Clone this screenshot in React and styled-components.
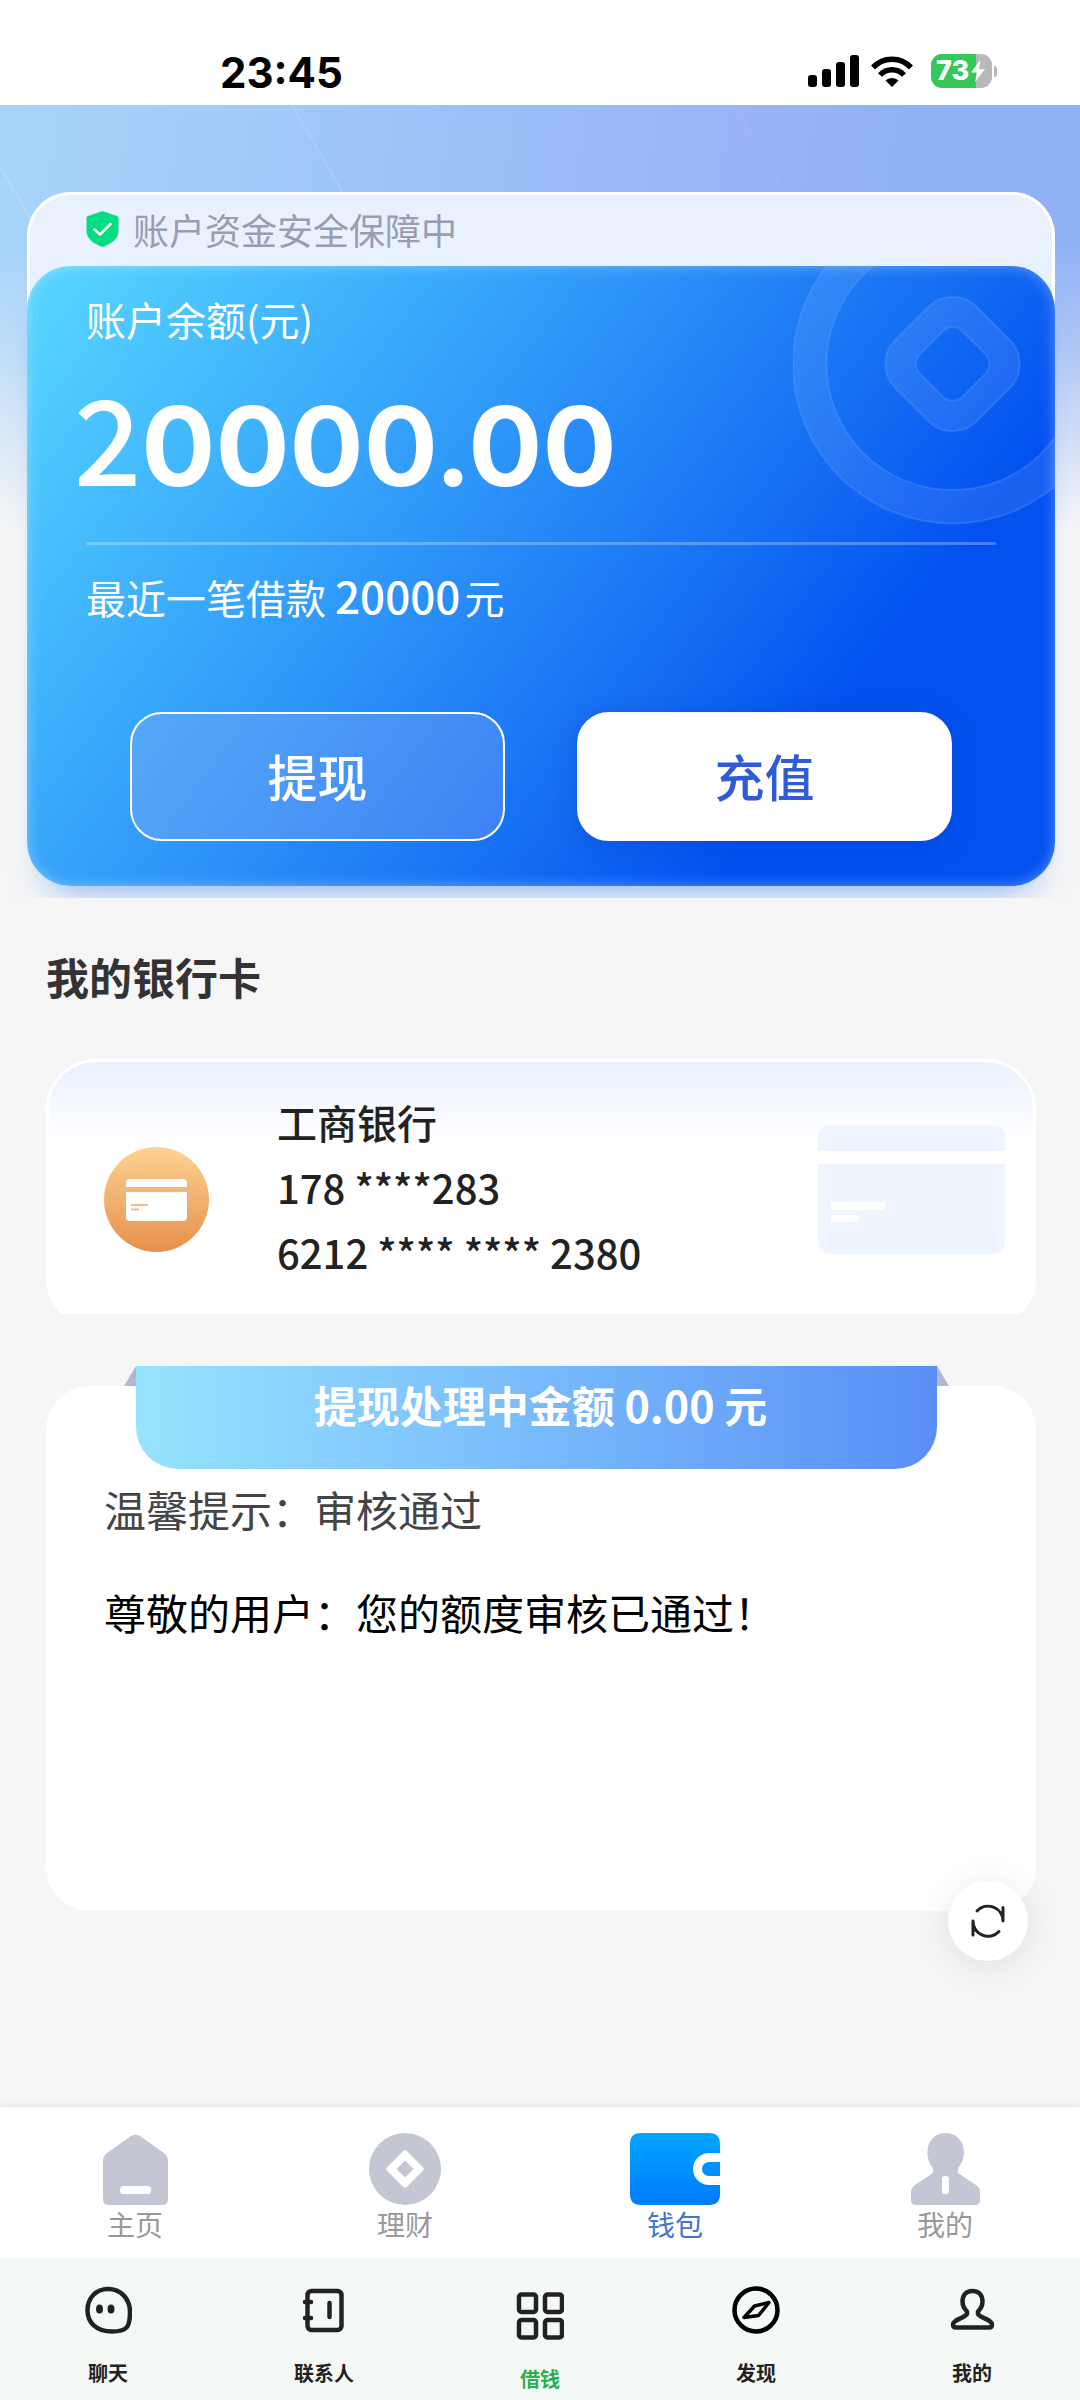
import styled, { createGlobalStyle, css } from "styled-components";

const GlobalStyle = createGlobalStyle`
  * {
    box-sizing: border-box;
  }

  body {
    margin: 0;
    background: #f6f6f6;
    color: #222;
    font-family: "Noto Sans CJK SC", sans-serif;
  }
`;

const Page = styled.div`
  display: flex;
  flex-direction: column;
  min-height: 100vh;
`;

/* ---------- status bar ---------- */

const StatusBar = styled.header`
  display: flex;
  align-items: flex-end;
  justify-content: space-between;
  height: 105px;
  padding: 0 83px 8px 220px;
  background: #fff;
`;

const Clock = styled.time`
  font-size: 42px;
  line-height: 48px;
  font-weight: 700;
  font-family: "Inter", sans-serif;
  color: #000;
`;

const StatusIcons = styled.div`
  display: flex;
  align-items: center;
  gap: 12px;
  padding-bottom: 9px;
`;

const Battery = styled.span`
  position: relative;
  display: flex;
  align-items: center;
  gap: 2px;
  width: 61px;
  height: 34px;
  margin: 0 5px 0 6px;
  padding-left: 5px;
  border-radius: 11px;
  background: linear-gradient(90deg, #34c759 74%, #b9b9b9 74%);
  color: #fff;
  font-family: "Inter", sans-serif;
  font-size: 27px;
  line-height: 34px;
  font-weight: 800;

  &::after {
    content: "";
    position: absolute;
    right: -5px;
    width: 3px;
    height: 11px;
    border-radius: 0 3px 3px 0;
    background: #b9b9b9;
  }
`;

/* ---------- hero with the balance card ---------- */

const Hero = styled.section`
  position: relative;
  overflow: hidden;
  padding: 87px 25px 12px 27px;
  background:
    linear-gradient(180deg, rgba(246, 246, 246, 0) 140px, rgba(246, 246, 246, 0.3) 240px, #f6f6f6 425px),
    linear-gradient(100deg, #a6d5fa 0%, #9fc5f8 30%, #98b4f6 62%, #90b2f4 75%);
`;

const HeroLines = styled.svg`
  position: absolute;
  top: 0;
  left: 0;
`;

const Account = styled.div`
  position: relative;
  border-radius: 44px;
  background: #eaf1fe;
  box-shadow: inset 0 0 0 3px #fff;
`;

const SafeNote = styled.p`
  display: flex;
  align-items: center;
  gap: 14px;
  height: 74px;
  margin: 0;
  padding-left: 59px;
  font-size: 36px;
  line-height: 52px;
  color: #989db3;
`;

const BalanceCard = styled.div`
  position: relative;
  padding: 25px 59px 45px;
  border-radius: 44px;
  background: linear-gradient(127deg, #54d3ff 3%, #2e96f9 40%, #1872f4 60%, #0352f0 77%);
  box-shadow:
    inset 0 0 14px rgba(255, 255, 255, 0.35),
    0 24px 36px -22px rgba(40, 120, 245, 0.6);
  color: #fff;
`;

const CoinMark = styled.svg`
  position: absolute;
  top: 0;
  right: 0;
  border-radius: 0 44px 0 0;
`;

const BalanceLabel = styled.div`
  font-size: 40px;
  line-height: 56px;
`;

const Balance = styled.div`
  display: flex;
  align-items: baseline;
  height: 134px;
  margin: 32px 0 29px -12px;
  font-family: "Inter", sans-serif;
  font-size: 110px;
  font-weight: 700;
  line-height: 134px;

  span {
    font-family: "Noto Sans CJK SC", sans-serif;
    font-size: 118px;
    font-weight: 500;
    line-height: 110px;
  }
`;

const Divider = styled.hr`
  height: 3px;
  margin: 0;
  border: 0;
  border-radius: 2px;
  background: rgba(255, 255, 255, 0.27);
`;

const LastLoan = styled.div`
  margin-top: 22px;
  font-size: 40px;
  line-height: 60px;

  span {
    margin-right: 4px;
    font-size: 44px;
    font-weight: 500;
    line-height: 44px;
  }
`;

const Actions = styled.div`
  display: flex;
  gap: 72px;
  padding: 0 44px;
  margin-top: 85px;
`;

const ActionButton = styled.button`
  flex: 1;
  height: 129px;
  padding: 0 0 4px;
  border: 2px solid #fff;
  border-radius: 32px;
  background: rgba(160, 175, 245, 0.28);
  color: #fff;
  font-family: inherit;
  font-size: 50px;
  font-weight: 500;
  cursor: pointer;

  ${({ $solid }) =>
    $solid &&
    css`
      background: #fff;
      color: #2f5bd8;
      box-shadow: 0 4px 24px rgba(0, 40, 150, 0.24);
    `}
`;

/* ---------- bank card ---------- */

const Content = styled.main`
  flex: 1;
  padding: 0 44px 0 46px;
`;

const SectionTitle = styled.h2`
  margin: 0;
  padding: 46px 0 51px;
  font-size: 43px;
  line-height: 64px;
  font-weight: 700;
  color: #333;
`;

// The bottom edge of the card is cut a little above its rounded end
const BankCardClip = styled.div`
  overflow: hidden;
`;

const BankCard = styled.article`
  display: grid;
  grid-template-columns: 105px 1fr 187px;
  align-items: center;
  column-gap: 68px;
  margin-bottom: -14px;
  padding: 28px 28px 40px 55px;
  border: 3px solid #fff;
  border-radius: 50px;
  background: linear-gradient(180deg, #e9f1ff 0, #f2f6ff 30px, #fff 78px);
`;

const BankIcon = styled.svg`
  margin-top: 24px;
`;

const CardGhost = styled.svg`
  margin-top: 4px;
`;

const BankLines = styled.div`
  font-size: 40px;
  line-height: 65px;
  font-weight: 500;
`;

/* ---------- notice panel ---------- */

const Notice = styled.section`
  position: relative;
  display: flex;
  flex-direction: column;
  min-height: 525px;
  margin-top: 72px;
  border-radius: 44px;
  background: #fff;
`;

const Ribbon = styled.h3`
  position: relative;
  height: 103px;
  margin: -20px 99px 8px 90px;
  border-radius: 0 0 42px 42px;
  background: linear-gradient(90deg, #97e3ff 0%, #78bbfc 50%, #5a8ef6 100%);
  color: #fff;
  font-size: 43px;
  line-height: 76px;
  font-weight: 700;
  text-align: center;
  padding-left: 8px;

  &::before,
  &::after {
    content: "";
    position: absolute;
    top: 0;
    width: 12px;
    height: 20px;
    background: #b1b7d3;
  }

  &::before {
    right: 100%;
    clip-path: polygon(100% 0, 100% 100%, 0 100%);
  }

  &::after {
    left: 100%;
    clip-path: polygon(0 0, 100% 100%, 0 100%);
  }
`;

const NoticeText = styled.p`
  margin: 0;
  padding: 0 58px;
  font-size: 42px;
  line-height: 64px;
  color: ${({ $muted }) => ($muted ? "#444" : "#000")};

  & + & {
    margin-top: 39px;
  }
`;

const RefreshButton = styled.button`
  position: absolute;
  right: 8px;
  bottom: -50px;
  display: grid;
  place-items: center;
  width: 80px;
  height: 80px;
  padding: 0;
  border: 0;
  border-radius: 50%;
  background: #fff;
  box-shadow: 0 4px 36px rgba(0, 0, 0, 0.1);
  cursor: pointer;
`;

/* ---------- bottom navigation ---------- */

const WalletNav = styled.nav`
  display: grid;
  grid-template-columns: repeat(4, 1fr);
  padding: 26px 0 14px;
  background: #fff;
  box-shadow: 0 -2px 6px rgba(0, 0, 0, 0.07);
`;

const WalletTab = styled.a`
  display: flex;
  flex-direction: column;
  align-items: center;
  color: ${({ $active }) => ($active ? "#4474cc" : "#999")};
  font-size: 28px;
  line-height: 39px;
  text-decoration: none;
`;

const AppNav = styled.nav`
  display: grid;
  grid-template-columns: repeat(5, 1fr);
  height: 142px;
  background: #f5f9f6;
`;

const AppTab = styled.a`
  display: flex;
  flex-direction: column;
  align-items: center;
  gap: 25px;
  padding-top: ${({ $active }) => ($active ? "34px" : "28px")};
  color: ${({ $active }) => ($active ? "#2bb04f" : "#222")};
  font-size: 20px;
  line-height: 28px;
  font-weight: 700;
  text-decoration: none;
`;

function LineIcon({ children }) {
  return (
    <svg
      width="48"
      height="48"
      viewBox="0 0 48 48"
      fill="none"
      stroke="#222"
      strokeWidth="4.5"
      strokeLinecap="round"
      strokeLinejoin="round"
    >
      {children}
    </svg>
  );
}

const walletTabs = [
  {
    label: "主页",
    icon: (
      <svg width="65" height="72" viewBox="0 0 65 72">
        <path
          fill="#c4c6d3"
          d="M28 3Q32.500 .5 37 3L61 20Q65 23 65 28V66Q65 72 59 72H6Q0 72 0 66V28Q0 23 4 20Z"
        />
        <rect x="17" y="53" width="31" height="8" rx="3.500" fill="#fff" />
      </svg>
    ),
  },
  {
    label: "理财",
    icon: (
      <svg width="72" height="72" viewBox="0 0 72 72">
        <circle cx="36" cy="36" r="36" fill="#c4c6d3" />
        <g transform="rotate(45 36 36)">
          <rect x="22" y="22" width="28" height="28" rx="3" fill="#fff" />
          <rect x="30" y="30" width="12" height="12" fill="#c4c6d3" />
        </g>
      </svg>
    ),
  },
  {
    label: "钱包",
    active: true,
    icon: (
      <svg width="90" height="72" viewBox="0 0 90 72">
        <defs>
          <linearGradient id="wallet" x1="0" y1="0" x2="0" y2="1">
            <stop offset="0" stopColor="#00a5ff" />
            <stop offset="1" stopColor="#007bff" />
          </linearGradient>
        </defs>
        <path
          fill="url(#wallet)"
          d="M11 0H79Q90 0 90 11V20H79A16 16 0 0 0 79 52H90V61Q90 72 79 72H11Q0 72 0 61V11Q0 0 11 0ZM90 29V43H79A7 7 0 0 1 79 29Z"
        />
      </svg>
    ),
  },
  {
    label: "我的",
    icon: (
      <svg width="69" height="72" viewBox="0 0 69 72">
        <path
          fill="#c4c6d3"
          d="M34.500 0C45 0 53 8 53 19C53 26 50.500 31 47 35V40L65 52Q69 55 69 59V67Q69 72 64 72H5Q0 72 0 67V59Q0 55 4 52L22 40V35C18.500 31 16.500 26 16.500 19C16.500 8 24 0 34.500 0Z"
        />
        <rect x="31" y="43" width="7" height="18" rx="3" fill="#fff" />
      </svg>
    ),
  },
];

const appTabs = [
  {
    label: "聊天",
    icon: (
      <LineIcon>
        <path d="M24 3C37 3 46 13 46 26C46 41 43 45.500 28 45.500C12 45.500 3.500 36 3.500 24.500C3.500 12 12 3 24 3Z" />
        <ellipse cx="15.500" cy="23" rx="3.500" ry="4.500" fill="#222" stroke="none" />
        <ellipse cx="27" cy="23" rx="3.500" ry="4.500" fill="#222" stroke="none" />
      </LineIcon>
    ),
  },
  {
    label: "联系人",
    icon: (
      <LineIcon>
        <rect x="7.500" y="5" width="34" height="39" rx="4" />
        <path d="M5 16H11M5 32H11M29.500 17V31" />
      </LineIcon>
    ),
  },
  {
    label: "借钱",
    active: true,
    icon: (
      <LineIcon>
        <rect x="3" y="2.500" width="17" height="17.500" rx="2.500" />
        <rect x="29" y="2.500" width="17" height="17.500" rx="2.500" />
        <rect x="3" y="28" width="17" height="17.500" rx="2.500" />
        <rect x="29" y="28" width="17" height="17.500" rx="2.500" />
      </LineIcon>
    ),
  },
  {
    label: "发现",
    icon: (
      <LineIcon>
        <circle cx="24" cy="24" r="21.500" stroke="#000" />
        <path d="M37 16.500L22.500 20L12 31.500L26.500 29.500Z" stroke="#000" strokeWidth="3.500" />
      </LineIcon>
    ),
  },
  {
    label: "我的",
    icon: (
      <LineIcon>
        <path d="M24.500 5C31 5 34.500 9.500 34.500 15.500C34.500 20 32.500 23 30 25.500V28C32 32 44 33.500 44 38.500Q44 41.500 41 41.500H8Q5 41.500 5 38.500C5 33.500 17 32 19 28V25.500C16.500 23 14.500 20 14.500 15.500C14.500 9.500 18 5 24.500 5Z" />
      </LineIcon>
    ),
  },
];

export default function App() {
  return (
    <Page>
      <GlobalStyle />

      <StatusBar>
        <Clock>23:45</Clock>
        <StatusIcons>
          <svg width="51" height="32" viewBox="0 0 51 32">
            <rect x="0" y="20" width="9" height="12" rx="3" />
            <rect x="14" y="14" width="9" height="18" rx="3" />
            <rect x="28" y="7" width="9" height="25" rx="3" />
            <rect x="42" y="0" width="9" height="32" rx="3" />
          </svg>
          <svg width="42" height="31" viewBox="0 0 42 31">
            <path
              fill="none"
              stroke="#000"
              strokeWidth="5.500"
              d="M2 11.500C12.500 .5 29.500 .5 40 11.500M9 19C15.500 12 26.500 12 33 19"
            />
            <path d="M14.500 24.500C18 21 24 21 27.500 24.500L21 31Z" />
          </svg>
          <Battery>
            73
            <svg width="14" height="22" viewBox="0 0 14 22" fill="#fff">
              <path d="M9.500 0L0 12.500H6L4 22L14 9H8Z" />
            </svg>
          </Battery>
        </StatusIcons>
      </StatusBar>

      <Hero>
        <HeroLines width="1080" height="200" viewBox="0 0 1080 200" stroke="#fff" strokeWidth="2">
          <path d="M292 0L345 92" opacity=".12" />
          <path d="M-10 44L40 130" opacity=".14" />
          <path d="M734 0L787 92" opacity=".05" />
        </HeroLines>
        <Account>
          <SafeNote>
            <svg width="33" height="36" viewBox="0 0 33 36">
              <path
                fill="#06dc83"
                d="M14.500 .8Q16.500 -.2 18.500 .8L31 5Q32.500 5.500 32.500 7V20C32.500 28 25 33 16.500 36C8 33 .5 28 .5 20V7Q.5 5.500 2 5Z"
              />
              <path
                d="M8.500 18.500L14 23.500L24.500 13"
                fill="none"
                stroke="#fff"
                strokeWidth="2.500"
                strokeLinecap="round"
                strokeLinejoin="round"
              />
            </svg>
            账户资金安全保障中
          </SafeNote>
          <BalanceCard>
            <CoinMark width="262" height="260" viewBox="0 0 262 260">
              <g fill="#fff" fillOpacity=".09" fillRule="evenodd" stroke="#8fb4ff" strokeOpacity=".2" strokeWidth="2">
                <path d="M0 98A159.500 159.500 0 1 1 319 98A159.500 159.500 0 1 1 0 98ZM33.500 98A126 126 0 1 0 285.500 98A126 126 0 1 0 33.500 98Z" />
                <path
                  transform="rotate(45 159.500 98)"
                  d="M136 40.500H183A34 34 0 0 1 217 74.500V121.500A34 34 0 0 1 183 155.500H136A34 34 0 0 1 102 121.500V74.500A34 34 0 0 1 136 40.500ZM143.500 68A14 14 0 0 0 129.500 82V114A14 14 0 0 0 143.500 128H175.500A14 14 0 0 0 189.500 114V82A14 14 0 0 0 175.500 68Z"
                />
              </g>
            </CoinMark>
            <BalanceLabel>账户余额(元)</BalanceLabel>
            <Balance>
              <span>2</span>0000.00
            </Balance>
            <Divider />
            <LastLoan>
              最近一笔借款 <span>20000</span>元
            </LastLoan>
            <Actions>
              <ActionButton type="button">提现</ActionButton>
              <ActionButton type="button" $solid>
                充值
              </ActionButton>
            </Actions>
          </BalanceCard>
        </Account>
      </Hero>

      <Content>
        <SectionTitle>我的银行卡</SectionTitle>
        <BankCardClip>
          <BankCard>
            <BankIcon width="105" height="105" viewBox="0 0 105 105">
              <defs>
                <linearGradient id="bank" x1="0" y1="0" x2="0" y2="1">
                  <stop offset="0" stopColor="#fdd394" />
                  <stop offset="1" stopColor="#e68f4a" />
                </linearGradient>
              </defs>
              <circle cx="52.500" cy="52.500" r="52.500" fill="url(#bank)" />
              <path fill="#fff" d="M22 40V36Q22 32 26 32H79Q83 32 83 36V40ZM22 45H83V70Q83 74 79 74H26Q22 74 22 70Z" />
              <path stroke="#f3bd83" strokeWidth="2" d="M27 58H44M27 62.500H35" />
            </BankIcon>
            <BankLines>
              <div>工商银行</div>
              <div>178 ****283</div>
              <div>6212 **** **** 2380</div>
            </BankLines>
            <CardGhost width="187" height="129" viewBox="0 0 187 129">
              <path
                fill="#eff5ff"
                d="M0 26V14Q0 0 14 0H173Q187 0 187 14V26ZM0 39H187V115Q187 129 173 129H14Q0 129 0 115Z"
              />
              <path fill="#fff" d="M13 77H67V85H13ZM13 90H40V97H13Z" />
            </CardGhost>
          </BankCard>
        </BankCardClip>

        <Notice>
          <Ribbon>提现处理中金额 0.00 元</Ribbon>
          <NoticeText $muted>温馨提示：审核通过</NoticeText>
          <NoticeText>尊敬的用户：您的额度审核已通过！</NoticeText>
          <RefreshButton type="button" aria-label="刷新">
            <svg
              width="36"
              height="36"
              viewBox="-18 -18 36 36"
              fill="none"
              stroke="#222"
              strokeWidth="3"
              strokeLinecap="round"
              strokeLinejoin="round"
            >
              <path d="M-11 -10A15 15 0 0 1 15 0V-13.500" />
              <path d="M11 10.500A15 15 0 0 1 -15 0V14" />
            </svg>
          </RefreshButton>
        </Notice>
      </Content>

      <WalletNav>
        {walletTabs.map((tab) => (
          <WalletTab key={tab.label} href="#" $active={tab.active}>
            {tab.icon}
            {tab.label}
          </WalletTab>
        ))}
      </WalletNav>
      <AppNav>
        {appTabs.map((tab) => (
          <AppTab key={tab.label} href="#" $active={tab.active}>
            {tab.icon}
            {tab.label}
          </AppTab>
        ))}
      </AppNav>
    </Page>
  );
}
